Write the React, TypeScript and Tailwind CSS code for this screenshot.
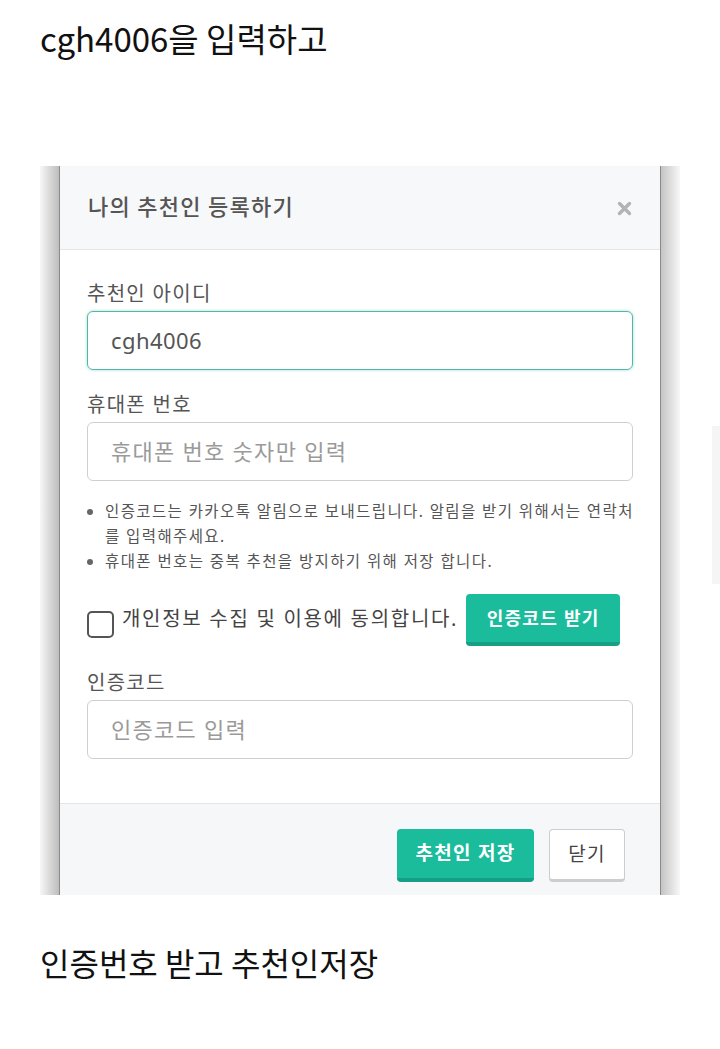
import React from 'react';

const font = { fontFamily: '"Noto Sans", "Noto Sans CJK KR", sans-serif' };

const TealButton: React.FC<{ label: string; className?: string }> = ({ label, className }) => (
    <button
        type="button"
        className={`bg-[#1abc9c] text-white font-bold rounded-[4px] border-b-[4px] border-[#15a085] ${className ?? ''}`}
    >
        {label}
    </button>
);

const Field: React.FC<{ label: string; value?: string; placeholder?: string; active?: boolean; top: string }> = ({ label, value, placeholder, active, top }) => (
    <div className={top}>
        <div className="text-[20px] leading-[28px] text-[#555]">{label}</div>
        <div
            className={`mt-[3px] h-[59px] w-[546px] rounded-[6px] border flex items-center px-[23px] text-[22px] ${
                active ? 'border-[#4fb9a9] shadow-[0_0_3px_rgba(79,185,169,0.6)] text-[#555] tracking-[0.02em]' : 'border-[#cfcfcf] text-[#9a9a9a]'
            }`}
        >
            {value ?? placeholder}
        </div>
    </div>
);

export default function App() {
    return (
        <div className="relative w-[720px] h-[1049px] bg-white overflow-hidden" style={{ fontFamily: '"Noto Sans CJK KR", sans-serif' }}>
            <div className="pl-[40px] pt-[16px] text-[33px] leading-[44px] text-[#111]">cgh4006을 입력하고</div>

            <div className="ml-[40px] mt-[106px] w-[640px] h-[729px] flex overflow-hidden">
                <div className="w-[19px] h-full bg-gradient-to-r from-[#f7f7f7] to-[#bdbdbd]" />
                <div className="w-[602px] h-full flex flex-col border-x border-[#8a8a8a] tracking-[0.08em]">
                    <div className="h-[84px] shrink-0 bg-[#f7f8fa] border-b border-[#e3e5e8] flex items-center justify-between pl-[28px] pr-[28px]">
                        <div className="text-[22px] font-medium text-[#555] pb-[4px]">나의 추천인 등록하기</div>
                        <svg width="15" height="15" viewBox="0 0 15 15" className="mt-[2px]">
                            <path d="M2.5 2.5 L12.5 12.5 M12.5 2.5 L2.5 12.5" stroke="#b3b3b3" strokeWidth="3.4" strokeLinecap="round" />
                        </svg>
                    </div>

                    <div className="h-[553px] shrink-0 bg-white pl-[27px] pr-[27px]" style={font}>
                        <Field label="추천인 아이디" value="cgh4006" active top="pt-[30px]" />
                        <Field label="휴대폰 번호" placeholder="휴대폰 번호 숫자만 입력" top="pt-[21px]" />

                        <ul className="mt-[18px] text-[15.5px] tracking-[0.09em] leading-[25px] text-[#555] list-disc pl-[18px] marker:text-[#666]">
                            <li>
                                <span className="whitespace-nowrap">인증코드는 카카오톡 알림으로 보내드립니다. 알림을 받기 위해서는 연락처</span>
                                <br />를 입력해주세요.
                            </li>
                            <li>휴대폰 번호는 중복 추천을 방지하기 위해 저장 합니다.</li>
                        </ul>

                        <div className="mt-[20px] flex items-center">
                            <div className="w-[27px] h-[27px] rounded-[5px] border-[2px] border-[#555] mt-[8px] shrink-0" />
                            <div className="ml-[8px] text-[20px] tracking-[0.085em] text-[#444] mt-[-2px] whitespace-nowrap">개인정보 수집 및 이용에 동의합니다.</div>
                            <TealButton label="인증코드 받기" className="ml-[8px] w-[154px] h-[52px] text-[18px] shrink-0" />
                        </div>

                        <Field label="인증코드" placeholder="인증코드 입력" top="pt-[23px]" />
                    </div>

                    <div className="flex-1 bg-[#f6f7f9] border-t border-[#e3e5e8] flex justify-end items-start pt-[25px] pr-[35px] gap-[15px]" style={font}>
                        <TealButton label="추천인 저장" className="w-[137px] h-[53px] text-[19px]" />
                        <button type="button" className="w-[76px] h-[53px] bg-white rounded-[4px] border border-[#cdcdcd] border-b-[3px] text-[19px] text-[#444]">
                            닫기
                        </button>
                    </div>
                </div>
                <div className="w-[19px] h-full bg-gradient-to-r from-[#c4c4c4] to-[#f8f8f8]" />
            </div>

            <div className="pl-[40px] mt-[45px] text-[32px] leading-[44px] text-[#111]">인증번호 받고 추천인저장</div>

            <div className="absolute right-0 top-[426px] w-[8px] h-[158px] bg-[#f5f5f5]" />
        </div>
    );
}
